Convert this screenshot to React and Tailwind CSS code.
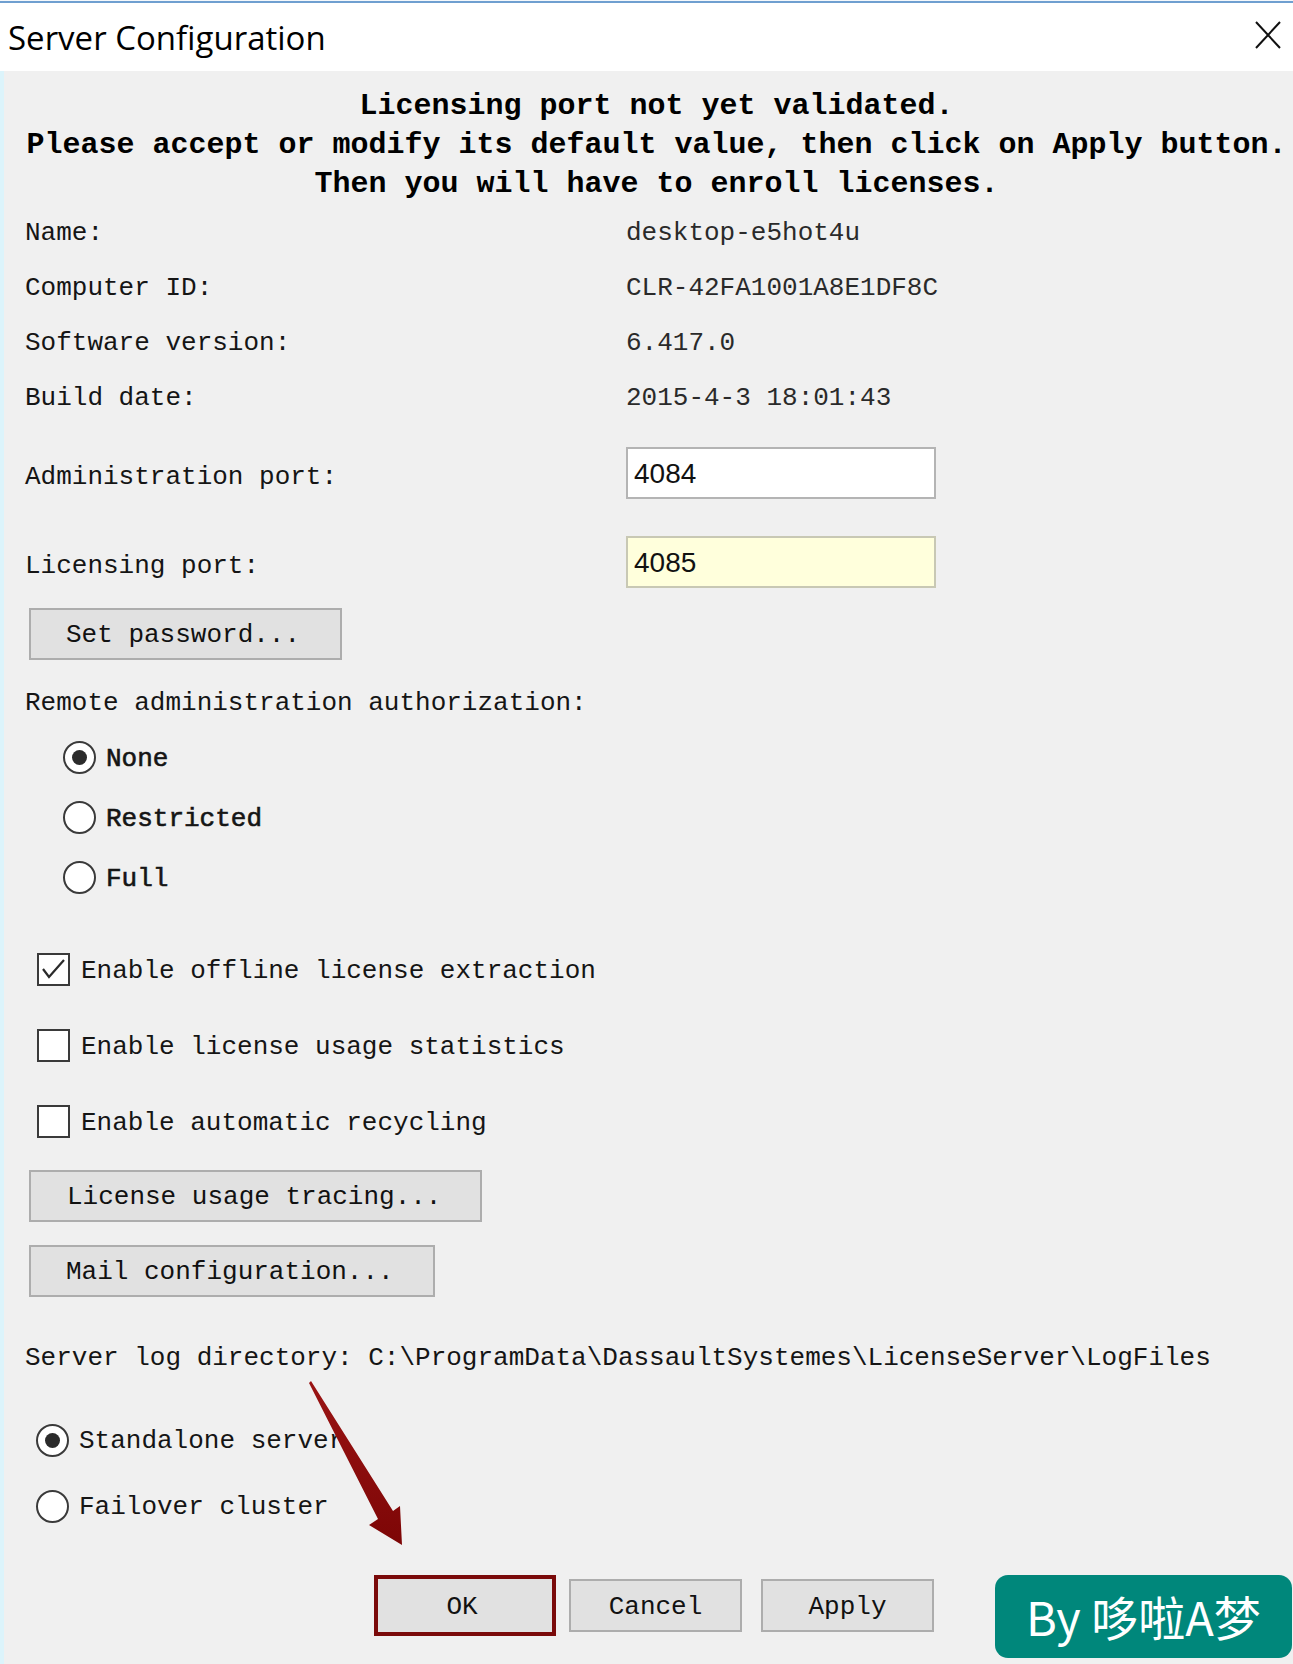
import React from "react";

const mono = "font-['Liberation_Mono',_'Courier_New',_monospace]";

function Radio({ checked }) {
  return (
    <span className="flex h-[33px] w-[33px] shrink-0 items-center justify-center rounded-full border-2 border-[#3a3a3a] bg-white">
      {checked && <span className="h-[15px] w-[15px] rounded-full bg-[#2b2b2b]" />}
    </span>
  );
}

function Checkbox({ checked }) {
  return (
    <span className="flex h-[33px] w-[33px] shrink-0 items-center justify-center border-2 border-[#3a3a3a] bg-white">
      {checked && (
        <svg viewBox="0 0 29 29" className="h-[29px] w-[29px]">
          <polyline points="4,14 10,22 25,5" fill="none" stroke="#2a2a2a" strokeWidth="2.2" />
        </svg>
      )}
    </span>
  );
}

function Button({ children, className = "" }) {
  return (
    <button
      className={`flex h-[52px] items-center border-2 border-[#adadad] bg-[#e1e1e1] pt-[3px] text-[26px] text-[#111] ${mono} ${className}`}
    >
      {children}
    </button>
  );
}

export default function App() {
  const info = [
    ["Name:", "desktop-e5hot4u"],
    ["Computer ID:", "CLR-42FA1001A8E1DF8C"],
    ["Software version:", "6.417.0"],
    ["Build date:", "2015-4-3 18:01:43"],
  ];

  return (
    <div className="relative h-[1664px] w-[1293px] overflow-hidden bg-[#f0f0f0]">
      {/* window title bar */}
      <div className="h-[71px] bg-white">
        <div className="h-[1px] bg-[#f4f8fc]" />
        <div className="h-[2px] bg-[#6f9fd0]" />
        <div className="flex h-[68px] items-center justify-between pl-[8px] pr-[12px]">
          <span className="font-['Open_Sans',_sans-serif] text-[33px] leading-none text-black">
            Server Configuration
          </span>
          <svg viewBox="0 0 26 28" className="mb-[4px] h-[28px] w-[26px]">
            <path d="M1 1 L25 27 M25 1 L1 27" stroke="#111" strokeWidth="2" fill="none" />
          </svg>
        </div>
      </div>

      <div className={`h-[1593px] border-l-[4px] border-[#dcf4fb] pl-[21px] pr-[5px] text-[26px] text-[#151515] ${mono}`}>
        {/* status message */}
        <div className="pt-[16px] text-center text-[30px] font-bold leading-[39px] text-black">
          <div>Licensing port not yet validated.</div>
          <div className="whitespace-nowrap">Please accept or modify its default value, then click on Apply button.</div>
          <div>Then you will have to enroll licenses.</div>
        </div>

        {/* server info */}
        <div className="-mt-[1px]">
          {info.map(([label, value]) => (
            <div key={label} className="flex h-[55px] items-center pt-[5px]">
              <span className="w-[601px]">{label}</span>
              <span className="text-[#2a2a2a]">{value}</span>
            </div>
          ))}
        </div>

        {/* ports */}
        <div className="mt-[24px] flex h-[52px] items-center">
          <span className="mt-[9px] w-[601px]">Administration port:</span>
          <div className="flex h-[52px] w-[310px] items-center border-2 border-[#b4b4b4] bg-white pl-[6px] pt-[2px] font-['Liberation_Sans',_Arial,_sans-serif] text-[28px] text-[#111]">
            4084
          </div>
        </div>
        <div className="mt-[37px] flex h-[52px] items-center">
          <span className="mt-[9px] w-[601px]">Licensing port:</span>
          <div className="flex h-[52px] w-[310px] items-center border-2 border-[#c8c8b4] bg-[#ffffdc] pl-[6px] pt-[2px] font-['Liberation_Sans',_Arial,_sans-serif] text-[28px] text-[#111]">
            4085
          </div>
        </div>

        <Button className="mt-[20px] ml-[4px] w-[313px] pl-[35px]">Set password...</Button>

        <div className="mt-[21px] flex h-[40px] items-center pt-[4px]">Remote administration authorization:</div>

        {/* remote access level */}
        <div className="mt-[6px] pl-[38px]">
          {[
            ["None", true],
            ["Restricted", false],
            ["Full", false],
          ].map(([label, on]) => (
            <div key={label} className="flex h-[60px] items-center gap-[10px]">
              <Radio checked={on} />
              <span className="pt-[4px] [-webkit-text-stroke:0.6px_#151515]">{label}</span>
            </div>
          ))}
        </div>

        {/* options */}
        <div className="mt-[37px] flex flex-col gap-[26px] pl-[12px]">
          {[
            ["Enable offline license extraction", true],
            ["Enable license usage statistics", false],
            ["Enable automatic recycling", false],
          ].map(([label, on]) => (
            <div key={label} className="flex h-[50px] items-center gap-[11px]">
              <Checkbox checked={on} />
              <span className="pt-[5px]">{label}</span>
            </div>
          ))}
        </div>

        <Button className="mt-[24px] ml-[4px] h-[51px] w-[453px] pl-[36px]">License usage tracing...</Button>
        <Button className="mt-[23px] ml-[4px] w-[406px] pl-[35px]">Mail configuration...</Button>

        <div className="mt-[40px] flex h-[40px] items-center whitespace-nowrap pt-[3px]">
          Server log directory: C:\ProgramData\DassaultSystemes\LicenseServer\LogFiles
        </div>

        {/* server mode */}
        <div className="mt-[30px] pl-[11px]">
          {[
            ["Standalone server", true],
            ["Failover cluster", false],
          ].map(([label, on]) => (
            <div key={label} className="flex h-[66px] items-center gap-[10px]">
              <Radio checked={on} />
              <span className="pt-[3px]">{label}</span>
            </div>
          ))}
        </div>

        {/* dialog buttons */}
        <div className="mt-[36px] flex h-[61px] items-center">
          <div className="ml-[349px] flex h-[61px] w-[182px] items-center justify-center border-[4px] border-[#7a0a0a]">
            <button className={`flex h-[53px] w-[174px] items-center justify-center bg-[#e1e1e1] pr-[6px] pt-[3px] text-[26px] text-[#111] ${mono}`}>
              OK
            </button>
          </div>
          <Button className="ml-[13px] h-[53px] w-[173px] justify-center">Cancel</Button>
          <Button className="ml-[19px] h-[53px] w-[173px] justify-center">Apply</Button>
        </div>
      </div>

      {/* pointer arrow */}
      <svg
        viewBox="300 1375 110 175"
        className="pointer-events-none absolute left-[300px] top-[1375px] h-[175px] w-[110px]"
      >
        <defs>
          <linearGradient id="arrowFill" x1="0" y1="0" x2="0" y2="1">
            <stop offset="0" stopColor="#9a1414" />
            <stop offset="1" stopColor="#7d0606" />
          </linearGradient>
        </defs>
        <polygon
          points="311,1381 393,1511 400,1506 402,1545 369,1525 378,1519 309,1383"
          fill="url(#arrowFill)"
        />
      </svg>

      {/* watermark */}
      <div className="absolute left-[995px] top-[1575px] flex h-[83px] w-[297px] items-center justify-center rounded-[13px] bg-[#00877b] font-['Noto_Sans_CJK_SC',_sans-serif] text-[47px] text-white">
        By 哆啦A梦
      </div>
    </div>
  );
}
